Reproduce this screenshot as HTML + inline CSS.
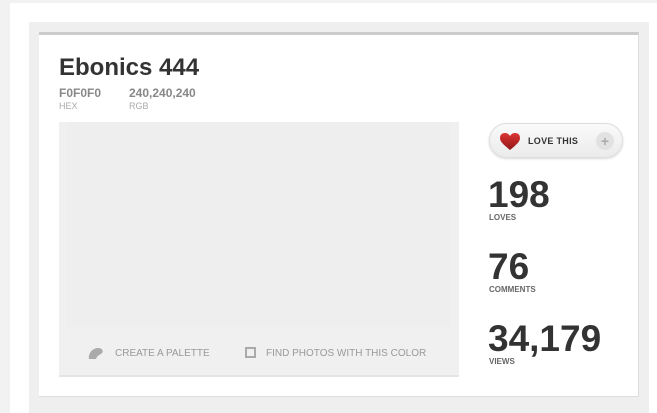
<!DOCTYPE html>
<html><head><style>
*{margin:0;padding:0;box-sizing:border-box}
html,body{width:657px;height:413px;overflow:hidden}
body{background:#f2f2f2;font-family:"Liberation Sans",Arial,sans-serif;position:relative}
.page{position:absolute;left:10px;top:3px;width:647px;height:420px;background:#fff}
.frame{position:absolute;left:29px;top:22px;width:620px;height:400px;background:#efefef}
.card{position:absolute;left:39px;top:32px;width:600px;height:365px;background:#fff;border-top:3px solid #ccc;border-right:1px solid #ddd;border-bottom:1px solid #ddd}
h1{position:absolute;left:20px;top:19px;font-size:24px;font-weight:bold;color:#333}
.v{position:absolute;top:51px;font-size:12px;font-weight:bold;color:#888}
.l{position:absolute;top:66px;font-size:9px;color:#aaa}
.sw{position:absolute;left:20px;top:87px;width:400px;height:255px;background:#f0f0f0;border-bottom:2px solid #e4e4e4}
.sw .in{position:absolute;left:8px;top:0;width:384px;height:205px;background:#eeeeee}
.act{position:absolute;top:226px;font-size:10px;color:#999}
.btn{position:absolute;left:450px;top:88px;width:134px;height:35px;border-radius:18px;background:linear-gradient(#fafafa,#ebebeb);border:1px solid #ddd;box-shadow:0 1px 2px rgba(0,0,0,.15)}
.btn span{position:absolute;left:38px;top:12px;font-size:9px;font-weight:bold;color:#333;letter-spacing:.3px}
.plus{position:absolute;right:8px;top:8px;width:18px;height:18px;border-radius:9px;background:#e2e2e2;color:#aaa;font-size:14px;font-weight:bold;text-align:center;line-height:18px}
.n{position:absolute;left:449px;font-size:37px;font-weight:bold;color:#333}
.nl{position:absolute;left:450px;font-size:8px;font-weight:bold;color:#666}
</style></head><body>
<div class="page"></div>
<div class="frame"></div>
<div class="card">
<h1>Ebonics 444</h1>
<div class="v" style="left:20px">F0F0F0</div><div class="l" style="left:20px">HEX</div>
<div class="v" style="left:90px">240,240,240</div><div class="l" style="left:90px">RGB</div>
<div class="sw"><div class="in"></div>
<svg style="position:absolute;left:29px;top:225px" width="16" height="13"><path d="M1 12 C0 6 5 1 10 1 C15 1 16 5 13 7 C11 8 9 9 8 12 Z" fill="#aaa"/></svg>
<div class="act" style="left:56px">CREATE A PALETTE</div>
<div style="position:absolute;left:186px;top:225px;width:11px;height:11px;border:2px solid #aaa"></div>
<div class="act" style="left:207px">FIND PHOTOS WITH THIS COLOR</div>
</div>
<div class="btn">
<svg style="position:absolute;left:9px;top:8px" width="22" height="19" viewBox="0 0 22 19"><defs><linearGradient id="g" x1="0" y1="0" x2="0" y2="1"><stop offset="0" stop-color="#d33"/><stop offset="1" stop-color="#901818"/></linearGradient></defs><path d="M11 18 C5 13 1 10 1 6 C1 2 4 1 6 1 C8.5 1 10 2.5 11 4 C12 2.5 13.5 1 16 1 C18 1 21 2 21 6 C21 10 17 13 11 18Z" fill="url(#g)"/></svg>
<span>LOVE THIS</span><div class="plus">+</div></div>
<div class="n" style="top:139px">198</div><div class="nl" style="top:178px">LOVES</div>
<div class="n" style="top:211px">76</div><div class="nl" style="top:250px">COMMENTS</div>
<div class="n" style="top:283px">34,179</div><div class="nl" style="top:322px">VIEWS</div>
</div>
</body></html>
